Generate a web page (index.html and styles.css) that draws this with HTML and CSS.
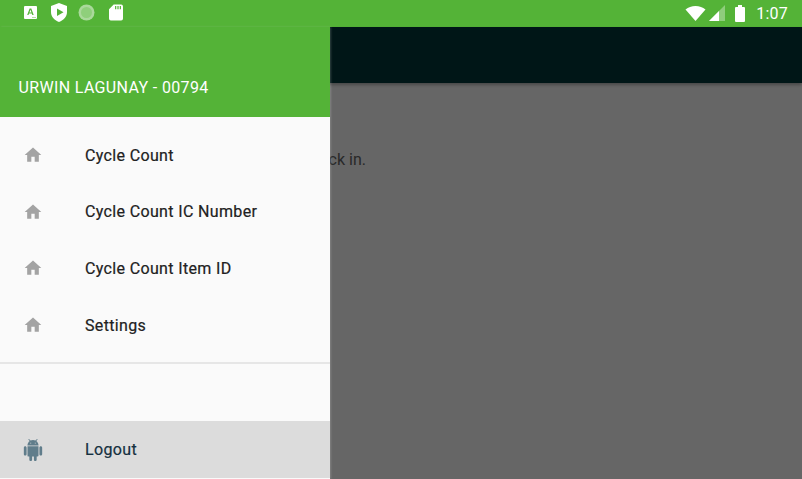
FILE: index.html
```html
<!DOCTYPE html>
<html lang="en">

<head>
    <meta charset="UTF-8">
    <title>Cycle Count</title>
    <link rel="stylesheet" href="styles.css">
</head>

<body>
    <svg class="sprites" width="0" height="0">
        <symbol id="home" viewBox="0 0 24 24">
            <path d="M10 20v-6h4v6h5v-8h3L12 3 2 12h3v8z" />
        </symbol>
        <symbol id="android" viewBox="0 0 24 24">
            <path d="M6 18c0 .55.45 1 1 1h1v3.500c0 .83.67 1.500 1.500 1.500s1.500-.67 1.500-1.500V19h2v3.500c0 .83.67 1.500 1.500 1.500s1.500-.67 1.500-1.500V19h1c.55 0 1-.45 1-1V8H6v10zM3.500 8C2.670 8 2 8.670 2 9.500v7c0 .83.67 1.500 1.500 1.500S5 17.330 5 16.500v-7C5 8.670 4.330 8 3.500 8zm17 0c-.83 0-1.500.67-1.500 1.500v7c0 .83.67 1.500 1.500 1.500s1.500-.67 1.500-1.500v-7c0-.83-.67-1.500-1.500-1.500zm-4.970-5.840l1.300-1.300c.2-.2.2-.51 0-.71-.2-.2-.51-.2-.71 0l-1.480 1.480C13.850 1.230 12.950 1 12 1c-.96 0-1.860.23-2.660.63L7.850.15c-.2-.2-.51-.2-.71 0-.2.2-.2.51 0 .71l1.310 1.310C6.970 3.260 6 5.010 6 7h12c0-1.990-.97-3.750-2.470-4.840zM10 5H9V4h1v1zm5 0h-1V4h1v1z" />
        </symbol>
    </svg>

    <div class="statusbar">
        <div class="status-left">
            <svg class="st-a" width="13" height="13" viewBox="0 0 13 13">
                <path fill-rule="evenodd" d="M1 0h11a1 1 0 0 1 1 1v11a1 1 0 0 1-1 1H1a1 1 0 0 1-1-1V1a1 1 0 0 1 1-1zM5.600 2.600 3.200 9h1.300l.5-1.400h2.800L8.300 9h1.400L7.300 2.600zM5.400 6.500 6.500 3.800 7.500 6.500z" fill="#fff" />
                <path d="M8 11h4v1H8z" fill="#b5dda8" />
            </svg>
            <svg class="st-shield" width="16" height="19" viewBox="0 0 16 19">
                <path fill-rule="evenodd" d="M8 0l8 3v6c0 4.500-3.200 8.300-8 10-4.800-1.700-8-5.500-8-10V3zM6 5.500v7.500l6.500-3.700z" fill="#fff" />
            </svg>
            <svg class="st-disc" width="17" height="17" viewBox="0 0 17 17">
                <circle cx="8.500" cy="8.500" r="8" fill="#fff" opacity=".5" />
                <circle cx="8.500" cy="8.500" r="5.500" fill="#8fcf7b" />
            </svg>
            <svg class="st-sd" width="14" height="17" viewBox="0 0 15 17">
                <path fill-rule="evenodd" d="M5 0h8a2 2 0 0 1 2 2v13a2 2 0 0 1-2 2H2a2 2 0 0 1-2-2V5zM6.500 1.500v3.500h1.300V1.500zM9 1.500v3.500h1.300V1.500zM11.500 1.500v3.500h1.300V1.500z" fill="#fff" />
            </svg>
        </div>
        <div class="status-right">
            <svg class="wifi" width="21" height="15" viewBox="0 0 20 15">
                <path d="M0 3.600C2.700 1.300 6.200 0 10 0s7.300 1.300 10 3.600L10 15z" fill="#fff" />
            </svg>
            <svg class="signal" width="16" height="16" viewBox="0 0 16 16">
                <path d="M16 0v16H0z" fill="#fff" opacity=".35" />
                <path d="M10 6v10H0z" fill="#fff" />
            </svg>
            <svg class="battery" width="10" height="17" viewBox="0 0 10 17">
                <path d="M3 0h4v2h2a1 1 0 0 1 1 1v13a1 1 0 0 1-1 1H1a1 1 0 0 1-1-1V3a1 1 0 0 1 1-1h2z" fill="#fff" />
            </svg>
            <span class="clock">1:07</span>
        </div>
    </div>

    <div class="screen">
        <div class="appbar"></div>
        <div class="content">
            <p>Please check in.</p>
        </div>
        <div class="scrim"></div>

        <nav class="drawer">
            <div class="drawer-head">URWIN LAGUNAY - 00794</div>
            <ul class="menu">
                <li class="menu-item"><svg class="menu-icon"><use href="#home" /></svg><span>Cycle Count</span></li>
                <li class="menu-item"><svg class="menu-icon"><use href="#home" /></svg><span>Cycle Count IC Number</span></li>
                <li class="menu-item"><svg class="menu-icon"><use href="#home" /></svg><span>Cycle Count Item ID</span></li>
                <li class="menu-item"><svg class="menu-icon"><use href="#home" /></svg><span>Settings</span></li>
            </ul>
            <div class="menu-sep"></div>
            <div class="menu-item logout"><svg class="menu-icon"><use href="#android" /></svg><span>Logout</span></div>
        </nav>
    </div>
</body>

</html>
```

FILE: styles.css
```css
html,
body {
    height: 100%;
}

body {
    margin: 0;
    display: flex;
    flex-direction: column;
    overflow: hidden;
    font-family: Roboto, "Liberation Sans", sans-serif;
    background-color: #fff;
}

.sprites {
    position: absolute;
}

.statusbar {
    height: 27px;
    flex-shrink: 0;
    display: flex;
    justify-content: space-between;
    align-items: center;
    background-color: #54b337;
    color: #fff;
}

.status-left {
    display: flex;
    align-items: center;
    padding-left: 24px;
    margin-top: -2px;
}

.st-shield {
    margin-left: 14px;
}

.st-disc {
    margin-left: 11px;
}

.st-sd {
    margin-left: 14px;
}

.status-right {
    display: flex;
    align-items: center;
    padding-right: 14px;
    margin-top: -1px;
}

.wifi {
    margin-right: 3px;
}

.signal {
    margin-right: 10px;
}

.battery {
    margin-right: 11px;
}

.clock {
    font-size: 16px;
    letter-spacing: .2px;
}

.screen {
    position: relative;
    flex-grow: 1;
    background-color: #fff;
}

.appbar {
    height: 56px;
    background-color: #00393a;
    box-shadow: 0 2px 3px rgba(0, 0, 0, 0.3);
}

.content p {
    margin: 0;
    padding: 67px 0 0 251px;
    font-size: 16px;
    color: #666;
}

.scrim {
    position: absolute;
    top: 0;
    left: 0;
    right: 0;
    bottom: 0;
    background: rgba(0, 0, 0, 0.6);
}

.drawer {
    position: absolute;
    top: 0;
    left: 0;
    bottom: 0;
    width: 330px;
    display: flex;
    flex-direction: column;
    background-color: #fafafa;
    box-shadow: 1px 0 2px rgba(255, 255, 255, 0.2);
}

.drawer-head {
    height: 90px;
    box-sizing: border-box;
    padding: 51px 0 0 18.500px;
    flex-shrink: 0;
    background-color: #54b337;
    color: #fff;
    font-size: 16px;
    letter-spacing: .35px;
}

.menu {
    list-style-type: none;
    margin: 0;
    padding: 10px 0 0;
}

.menu-item {
    height: 56.600px;
    display: flex;
    align-items: center;
    font-size: 16px;
    color: #212121;
    letter-spacing: .35px;
    -webkit-text-stroke: .2px currentColor;
}

.menu-icon {
    width: 20px;
    height: 20px;
    margin: 0 42px 0 23px;
    fill: #a3a3a3;
}

.menu-sep {
    height: 2px;
    margin-top: 9px;
    background-color: #e6e6e6;
}

.logout {
    margin-top: 57px;
    background-color: #dcdcdc;
    color: #15303f;
}

.logout .menu-icon {
    width: 22px;
    height: 22px;
    margin: 0 41.500px 0 21.500px;
    fill: #607d8b;
}
```
